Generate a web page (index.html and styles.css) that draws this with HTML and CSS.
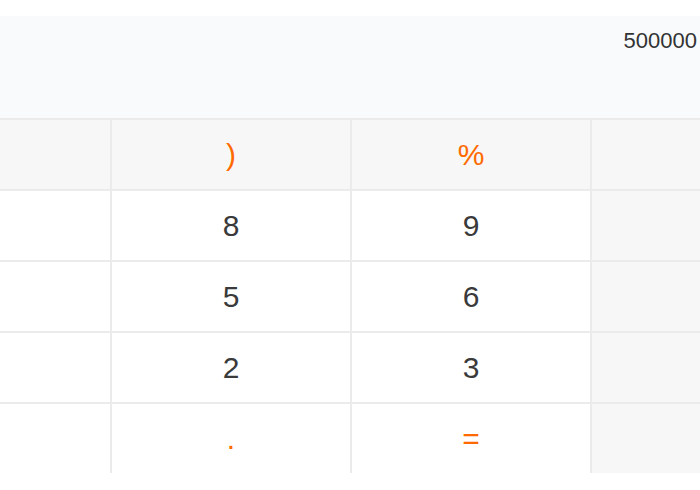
FILE: index.html
```html
<!DOCTYPE html>
<html>
<head>
<meta charset="utf-8">
<link rel="stylesheet" href="styles.css">
</head>
<body>
<div class="calc">
  <div class="spacer"></div>
  <div class="display"><span class="value">500000</span></div>
  <div class="keys">
    <div class="key fn op">(</div>
    <div class="key fn op">)</div>
    <div class="key fn op">%</div>
    <div class="key side op">÷</div>

    <div class="key">7</div>
    <div class="key">8</div>
    <div class="key">9</div>
    <div class="key side op">×</div>

    <div class="key">4</div>
    <div class="key">5</div>
    <div class="key">6</div>
    <div class="key side op">−</div>

    <div class="key">1</div>
    <div class="key">2</div>
    <div class="key">3</div>
    <div class="key side op">+</div>

    <div class="key">0</div>
    <div class="key op">.</div>
    <div class="key op">=</div>
    <div class="key side op">C</div>
  </div>
</div>
</body>
</html>
```

FILE: styles.css
```css
html, body {
  margin: 0;
  padding: 0;
  background: #ffffff;
  overflow: hidden;
  width: 700px;
  height: 490px;
}

.calc {
  width: 700px;
  font-family: "Liberation Sans", Arial, sans-serif;
}

.spacer {
  height: 16px;
  background: #ffffff;
}

.display {
  height: 102px;
  box-sizing: border-box;
  background: #f9fafc;
  padding: 12px 3px 0 0;
  text-align: right;
  font-size: 22px;
  line-height: 26px;
  color: #333333;
}

.keys {
  margin-left: -128px;
  width: 958px;
  display: grid;
  grid-template-columns: repeat(4, 238px);
  grid-template-rows: repeat(5, 69px);
  gap: 2px;
  background: #ebebeb;
  border-top: 2px solid #ebebeb;
}

.key {
  background: #ffffff;
  display: flex;
  align-items: center;
  justify-content: center;
  font-size: 30px;
  color: #3a3a3a;
}

.key.fn,
.key.side {
  background: #f7f7f7;
}

.key.op {
  color: #ff6a00;
}
```
